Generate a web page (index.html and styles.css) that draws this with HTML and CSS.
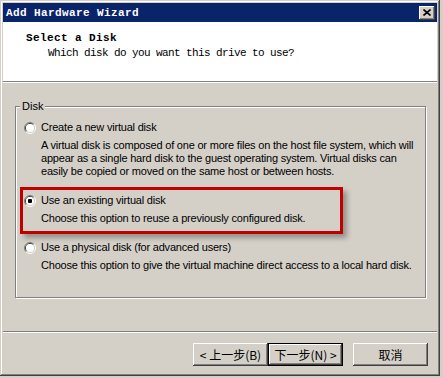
FILE: index.html
```html
<!DOCTYPE html>
<html lang="en">
<head>
    <meta charset="UTF-8">
    <title>Add Hardware Wizard</title>
    <link rel="stylesheet" href="styles.css">
</head>
<body>
    <div class="window">
        <div class="titlebar">
            <span class="title">Add Hardware Wizard</span>
            <span class="close-btn">
                <svg width="8" height="7" viewBox="0 0 8 7"><path d="M0.5 0.5 L7.5 6.5 M7.5 0.5 L0.5 6.5" stroke="#000" stroke-width="1.6" fill="none"/></svg>
            </span>
        </div>

        <div class="header">
            <div class="header-title">Select a Disk</div>
            <div class="header-sub">Which disk do you want this drive to use?</div>
        </div>

        <div class="content">
            <div class="group">
                <div class="group-label"><span>Disk</span></div>

                <div class="option">
                    <div class="option-row">
                        <svg class="radio" width="12" height="12" viewBox="0 0 12 12">
                            <path d="M9.9 2.1 A5.5 5.5 0 0 0 2.1 9.9" stroke="#808080" fill="none"/>
                            <path d="M2.1 9.9 A5.5 5.5 0 0 0 9.9 2.1" stroke="#fff" fill="none"/>
                            <path d="M9.2 2.8 A4.5 4.5 0 0 0 2.8 9.2" stroke="#404040" fill="none"/>
                            <path d="M2.8 9.2 A4.5 4.5 0 0 0 9.2 2.8" stroke="#d4d0c8" fill="none"/>
                            <circle cx="6" cy="6" r="4" fill="#fff"/>
                        </svg>
                        <span>Create a new virtual disk</span>
                    </div>
                    <div class="desc">A virtual disk is composed of one or more files on the host file system, which will<br>appear as a single hard disk to the guest operating system. Virtual disks can<br>easily be copied or moved on the same host or between hosts.</div>
                </div>

                <div class="option highlight">
                    <div class="option-row">
                        <svg class="radio" width="12" height="12" viewBox="0 0 12 12">
                            <path d="M9.9 2.1 A5.5 5.5 0 0 0 2.1 9.9" stroke="#808080" fill="none"/>
                            <path d="M2.1 9.9 A5.5 5.5 0 0 0 9.9 2.1" stroke="#fff" fill="none"/>
                            <path d="M9.2 2.8 A4.5 4.5 0 0 0 2.8 9.2" stroke="#404040" fill="none"/>
                            <path d="M2.8 9.2 A4.5 4.5 0 0 0 9.2 2.8" stroke="#d4d0c8" fill="none"/>
                            <circle cx="6" cy="6" r="4" fill="#fff"/>
                            <rect x="4" y="4" width="4" height="4" rx="1" fill="#000"/>
                        </svg>
                        <span>Use an existing virtual disk</span>
                    </div>
                    <div class="desc">Choose this option to reuse a previously configured disk.</div>
                </div>

                <div class="option">
                    <div class="option-row">
                        <svg class="radio" width="12" height="12" viewBox="0 0 12 12">
                            <path d="M9.9 2.1 A5.5 5.5 0 0 0 2.1 9.9" stroke="#808080" fill="none"/>
                            <path d="M2.1 9.9 A5.5 5.5 0 0 0 9.9 2.1" stroke="#fff" fill="none"/>
                            <path d="M9.2 2.8 A4.5 4.5 0 0 0 2.8 9.2" stroke="#404040" fill="none"/>
                            <path d="M2.8 9.2 A4.5 4.5 0 0 0 9.2 2.8" stroke="#d4d0c8" fill="none"/>
                            <circle cx="6" cy="6" r="4" fill="#fff"/>
                        </svg>
                        <span>Use a physical disk (for advanced users)</span>
                    </div>
                    <div class="desc">Choose this option to give the virtual machine direct access to a local hard disk.</div>
                </div>
            </div>
        </div>

        <div class="separator"></div>

        <div class="footer">
            <div class="btn">&lt; 上一步(B)</div>
            <div class="btn default">下一步(N) &gt;</div>
            <div class="btn cancel">取消</div>
        </div>
    </div>
</body>
</html>
```

FILE: styles.css
```css
* {
    box-sizing: border-box;
}
html {
    background: #d4d0c8;
}
body {
    margin: 0;
    font-family: "Liberation Sans", Arial, sans-serif;
    font-size: 11px;
    color: #000;
}

/* classic window frame */
.window {
    width: 440px;
    height: 376px;
    padding: 3px;
    display: flex;
    flex-direction: column;
    background: #d4d0c8;
    box-shadow: inset -1px -1px #404040, inset 1px 1px #d4d0c8, inset -2px -2px #808080, inset 2px 2px #fff;
}

.titlebar {
    height: 19px;
    flex-shrink: 0;
    display: flex;
    align-items: center;
    justify-content: space-between;
    padding: 0 2px 0 3px;
    background: #0a246a;
}
.title {
    color: #fff;
    font: bold 11px "Liberation Mono", monospace;
    letter-spacing: 0.4px;
}
.close-btn {
    width: 16px;
    height: 14px;
    display: flex;
    align-items: center;
    justify-content: center;
    background: #d4d0c8;
    box-shadow: inset -1px -1px #404040, inset 1px 1px #fff, inset -2px -2px #808080, inset 2px 2px #d4d0c8;
}

.header {
    height: 60px;
    flex-shrink: 0;
    padding: 10px 0 0 23px;
    background: #fff;
    border-bottom: 1px solid #808080;
    box-shadow: 0 1px #fff;
    margin-bottom: 1px;
    font-family: "Liberation Mono", monospace;
    font-size: 11px;
    line-height: 13px;
}
.header-title {
    font-weight: bold;
    letter-spacing: 0.4px;
}
.header-sub {
    margin-top: 2px;
    padding-left: 22px;
    letter-spacing: -0.6px;
}

.content {
    flex: 1;
    padding: 0 11px 0 12px;
}

/* etched group box */
.group {
    margin-top: 23px;
    padding: 0 0 16px 4px;
    border: 1px solid #808080;
    box-shadow: 1px 1px 0 #fff, inset 1px 1px 0 #fff;
}
.group-label {
    margin: -7px 0 1px 0;
    line-height: 13px;
}
.group-label span {
    padding: 0 2px;
    background: #d4d0c8;
}

.option {
    border: 3px solid transparent;
    padding: 4px 0 6px 1px;
    line-height: 13px;
    letter-spacing: -0.2px;
    white-space: nowrap;
}
.option.highlight {
    width: 323px;
    border-color: #c00000;
    box-shadow: 4px 4px 5px rgba(0, 0, 0, 0.3);
}
.option-row {
    display: flex;
    align-items: center;
    gap: 5px;
}
.radio {
    flex-shrink: 0;
    display: block;
}
.desc {
    margin-top: 5px;
    padding-left: 17px;
}

.separator {
    height: 2px;
    flex-shrink: 0;
    border-top: 1px solid #808080;
    border-bottom: 1px solid #fff;
}

.footer {
    height: 40px;
    flex-shrink: 0;
    display: flex;
    justify-content: flex-end;
    padding: 10px 9px 0 0;
}
.btn {
    width: 75px;
    height: 23px;
    display: flex;
    align-items: center;
    justify-content: center;
    font-family: "Noto Sans CJK SC", sans-serif;
    font-size: 12px;
    background: #d4d0c8;
    box-shadow: inset -1px -1px #404040, inset 1px 1px #fff, inset -2px -2px #808080, inset 2px 2px #d4d0c8;
}
.btn.default {
    border: 1px solid #000;
}
.btn.cancel {
    margin-left: 10px;
}
```
